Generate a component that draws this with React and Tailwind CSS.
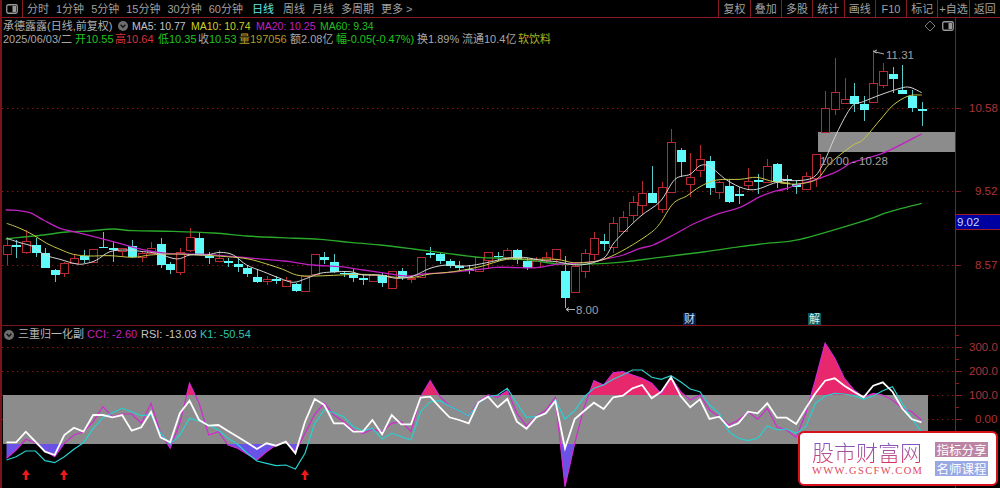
import React from "react";

const X = (i) => 6.7 + 9.63 * i;
const Z5 = (c, a, b, d, e) => [c, 200 + a / 3, 200 + b / 3, 200 + d / 3, 200 + e / 3];
const Z4 = (c, a, b, d, e) => [c, 120 + a / 3, 120 + b / 3, 120 + d / 3, 120 + e / 3];
const Z3 = (c, a, b, d, e) => [c, 40 + a / 3, 40 + b / 3, 40 + d / 3, 40 + e / 3];
const R = 1, C = 0;
const candles = [
  ...[
    [R,135,163,112,195],[C,135,140,120,175],[R,122,155,90,163],[C,135,158,115,170],[C,160,203,143,205],[C,210,225,208,247],
    [R,189,220,185,230],[R,173,188,165,192],[C,168,180,150,190],[R,146,187,146,190],[C,140,142,95,142],[C,144,148,125,185],
    [R,144,153,144,170],[C,137,172,120,175],[R,160,170,153,185],[R,145,158,125,162],[C,132,195,115,203],[C,192,210,185,223],
    [R,156,215,143,225],[R,112,150,83,155],[C,115,165,97,165],[C,167,173,155,193],[R,175,182,150,185],[C,184,190,175,200],
    [C,193,202,178,215],[C,205,222,195,230],[C,230,245,210,248],[R,238,244,228,255],[C,238,244,228,252],
    [R,240,257,230,258],[C,252,272,248,277],[R,227,274,227,276],[R,162,222,162,224],[C,170,180,155,192],[C,186,216,163,218],
    [C,218,222,212,232],[C,218,235,205,246],[C,233,239,222,256],[R,226,244,222,246],[C,226,248,220,260],[R,214,263,214,265],
    [C,212,232,203,240],[R,233,238,225,250],[R,172,232,172,234],[C,159,163,140,175],[C,162,183,160,192],[C,184,198,178,205],
    [C,197,204,182,212],[C,208,212,195,222],[R,172,212,172,216],[R,157,180,157,205],[C,167,170,155,182],[R,149,172,143,172],
    [C,150,180,148,192],[C,183,203,175,210],[R,182,202,170,204],[R,172,180,155,185],[R,146,178,146,190],
  ].map((a) => Z5(...a)),
  ...[
    [C,453,535,408,565],[R,438,516,430,518],[R,398,454,388,475],[R,354,401,335,420],[C,362,373,343,393],[R,308,381,292,400],
    [R,290,332,272,340],[R,245,286,228,310],[R,218,256,183,285],[C,220,250,137,250],[R,202,268,185,280],[R,67,217,28,217],
    [C,90,125,83,172],[R,170,193,100,232],[R,117,150,75,170],[C,122,204,108,225],[R,187,217,182,238],[C,198,246,180,250],
    [C,222,226,200,252],[R,182,196,145,208],[C,181,185,163,222],[R,139,187,117,190],[C,133,187,128,205],
  ].map((a) => Z4(...a)),
  ...[
    [C,418,421,405,450],[C,433,441,420,462],[R,408,447,395,450],[R,343,415,343,440],[R,205,275,152,277],[R,155,207,55,225],
    [R,177,188,115,190],[C,168,191,128,215],[C,193,209,168,242],[R,130,187,30,187],[R,94,136,70,145],[C,103,116,80,160],
    [C,150,163,75,163],[C,168,203,150,215],[C,208,212,187,258],
  ].map((a) => Z3(...a)),
];

const pz = (ox, oy, pts) => pts.map(([x, y]) => [ox + x / 3, oy + y / 3]);
const toStr = (pts) => pts.map((p) => p.map((n) => n.toFixed(1)).join(",")).join(" ");

const ma20 = [
  ...pz(0,200,[[17,30],[50,31],[90,38],[130,60],[180,85],[230,97],[290,112],[350,128],[400,142],[450,153],[500,160],[550,162],[620,163],[700,170],[760,175]]),
  ...pz(280,200,[[0,182],[30,185],[100,195],[180,200],[250,210],[320,220],[380,228],[430,222],[500,218],[600,208],[650,202],[720,203],[770,203],[830,193]]),
  ...pz(560,120,[[40,430],[100,425],[130,418],[190,405],[240,385],[280,375],[340,345],[400,312],[470,283],[540,262],[600,230],[640,215],[680,205]]),
  ...pz(780,40,[[0,452],[50,435],[110,418],[170,395],[215,368],[260,355],[320,335],[425,282]]),
];
const ma60 = [
  ...pz(0,200,[[17,117],[60,112],[130,105],[200,96],[270,93],[340,87],[400,92],[520,94],[640,99],[740,108]]),
  ...pz(280,200,[[0,113],[120,118],[210,127],[300,135],[400,147],[500,160],[600,172],[680,175],[760,182]]),
  ...pz(560,120,[[0,432],[120,431],[200,425],[300,412],[430,396],[540,380],[620,370],[720,358]]),
  ...pz(780,40,[[260,540],[320,518],[425,490]]),
];
const ma10 = [
  ...pz(0,200,[[20,70],[60,85],[100,105],[140,130],[180,148],[220,163],[270,168],[330,167],[400,172],[450,165],[520,162],[600,165],[680,170],[750,178]]),
  ...pz(280,200,[[0,205],[50,225],[100,228],[160,226],[230,223],[290,225],[350,232],[400,232],[450,222],[520,215],[600,200],[680,178],[760,178],[830,178]]),
  ...pz(560,120,[[40,428],[100,425],[140,415],[200,385],[270,340],[300,310],[340,250],[380,228],[420,200],[470,180],[540,178],[590,172],[640,185],[690,190]]),
  ...pz(780,40,[[0,428],[50,432],[110,418],[150,370],[215,318],[250,298],[300,240],[340,195],[385,168],[425,165]]),
];
const ma5 = [
  ...pz(0,200,[[20,115],[60,128],[100,140],[135,165],[180,178],[230,192],[260,190],[290,180],[330,155],[380,150],[430,155],[470,160],[530,177],[570,165],[620,165],[660,157],[700,165],[740,195],[790,215]]),
  ...pz(280,200,[[0,235],[40,247],[80,235],[120,220],[160,216],[210,215],[250,225],[300,225],[350,235],[400,228],[450,205],[500,195],[560,198],[620,188],[680,175],[730,172],[790,182],[830,185]]),
  ...pz(560,120,[[60,435],[130,415],[165,365],[240,290],[300,245],[345,178],[390,163],[420,137],[450,140],[500,180],[550,205],[590,208],[640,190],[680,180]]),
  ...pz(780,40,[[0,418],[50,422],[100,412],[130,370],[170,280],[215,200],[250,185],[300,165],[360,145],[390,142],[425,158]]),
];

const smooth = (pts) => {
  let d = `M${pts[0][0]},${pts[0][1]}`;
  for (let i = 0; i < pts.length - 1; i++) {
    const p0 = pts[Math.max(0, i - 1)], p1 = pts[i], p2 = pts[i + 1], p3 = pts[Math.min(pts.length - 1, i + 2)];
    d += ` C${p1[0] + (p2[0] - p0[0]) / 6},${p1[1] + (p2[1] - p0[1]) / 6} ${p2[0] - (p3[0] - p1[0]) / 6},${p2[1] - (p3[1] - p1[1]) / 6} ${p2[0]},${p2[1]}`;
  }
  return d;
};

const rsiY = [367,367,335,365,395,405,345,323,335,285,285,292,285,332,322,275,352,367,280,242,300,317,315,333,350,368,387,370,377,365,400,305,237,255,310,310,335,335,300,343,285,313,313,233,230,262,292,300,310,247,230,262,237,305,326,292,280,243,385,297,272,248,267,232,227,205,195,235,215,172,228,262,238,297,290,322,310,275,280,250,293,293,312,265,220,182,175,197,215,232,197,187,215,265,297,307];
const cciY = [415,390,358,368,393,410,370,345,335,305,260,290,282,282,310,250,340,385,310,190,250,345,335,375,385,403,420,395,375,365,395,340,283,250,285,305,330,340,328,335,310,305,335,230,182,230,258,272,288,245,225,232,212,280,318,290,270,232,500,370,260,182,195,158,155,165,175,190,222,172,215,240,225,270,290,315,300,275,298,265,320,330,352,280,180,70,115,175,210,232,220,225,240,265,275,300];
const k1Y = [420,410,393,393,422,428,410,388,368,325,293,278,265,275,287,285,340,372,345,295,303,315,330,355,373,400,423,430,437,435,447,400,310,270,278,290,320,332,325,357,340,350,360,275,245,242,258,272,288,250,230,225,205,250,292,290,280,240,297,272,230,205,195,178,165,150,150,172,178,167,185,207,215,255,280,335,355,362,355,318,330,327,340,320,250,228,220,222,227,237,228,212,200,250,295,335];
const toPts = (arr) => arr.map((v, i) => [X(i) - 0.2, 320 + v / 3]);
const rsi = toPts(rsiY), cci = toPts(cciY), k1 = toPts(k1Y);
const closeTo = (pts, y) => toStr([[pts[0][0], y], ...pts, [pts[pts.length - 1][0], y]]);

const CJK = "font-['Liberation_Sans','Noto_Sans_CJK_SC',sans-serif]";

function PanelIcon() {
  return (
    <svg width="12" height="10" viewBox="0 0 12 10" fill="none">
      <rect x="0.75" y="0.75" width="10.5" height="8.5" rx="1.5" stroke="#9a9a9a" strokeWidth="1.3" />
      <rect x="6.5" y="2" width="3.5" height="6" fill="#9a9a9a" />
    </svg>
  );
}

function Chevron() {
  return (
    <svg width="10" height="10" viewBox="0 0 10 10" className="shrink-0">
      <circle cx="5" cy="5" r="5" fill="#6e6e6e" />
      <path d="M2.6 3.8 L5 6.3 L7.4 3.8" fill="none" stroke="#111" strokeWidth="1.3" />
    </svg>
  );
}

const leftTabs = [
  ["分时", 0], ["1分钟", 0], ["5分钟", 0], ["15分钟", 0], ["30分钟", 0], ["60分钟", 0],
  ["日线", 1], ["周线", 0], ["月线", 0], ["多周期", 0], ["更多 >", 0],
];
const rightTabs = ["复权", "叠加", "多股", "统计", "画线", "F10", "标记", "+自选", "返回"];

function Toolbar() {
  return (
    <div className="h-[18px] shrink-0 flex items-stretch border-b border-[#8a1a22] text-[11px] leading-[16px] text-[#a0a0a0]">
      <div className="w-[21px] shrink-0 flex items-center justify-center border-r border-[#8a1a22]">
        <PanelIcon />
      </div>
      <div className="flex items-center gap-[7px] pl-[4px]">
        {leftTabs.map(([t, on]) => (
          <span key={t} className={on ? "text-[#5fe6e6] mx-[2px]" : ""}>{t}</span>
        ))}
      </div>
      <div className="ml-auto flex items-stretch">
        {rightTabs.map((t) => (
          <span key={t} className="w-[31.3px] flex items-center justify-center border-l border-[#8a1a22] whitespace-nowrap">{t}</span>
        ))}
      </div>
    </div>
  );
}

function MainLegend() {
  const G = "text-[#1fc41f]", r = "text-[#d8303a]", y = "text-[#b39a2a]", g = "text-[#a8a8a8]";
  return (
    <div className="absolute left-[1px] top-[1px] flex flex-col text-[11px] leading-[12px] whitespace-nowrap pointer-events-none">
      <div className="flex items-center h-[14px]">
        <span className="text-[#b0b0b0] w-[115px]">承德露露(日线,前复权)</span>
        <Chevron />
        <span className="text-[#c4c4c4] ml-[4px] w-[59px] text-[10.5px]">MA5: 10.77</span>
        <span className="text-[#d0d020] w-[65px] text-[10.5px]">MA10: 10.74</span>
        <span className="text-[#c020c0] w-[64px] text-[10.5px]">MA20: 10.25</span>
        <span className="text-[#20c020] text-[10.5px]">MA60: 9.34</span>
      </div>
      <div className="flex items-center h-[12px]">
        <span className={`${g} w-[72px]`}>2025/06/03/二</span>
        <span className={`${G} w-[40px]`}>开10.55</span>
        <span className={`${r} w-[43px]`}>高10.64</span>
        <span className={`${G} w-[40px]`}>低10.35</span>
        <span className={`w-[41px] ${G}`}><span className={g}>收</span>10.53</span>
        <span className={`w-[51px] ${y}`}>量197056</span>
        <span className={`${g} w-[46px]`}>额2.08亿</span>
        <span className={`${G} w-[81px]`}>幅-0.05(-0.47%)</span>
        <span className={`${g} w-[45px]`}>换1.89%</span>
        <span className={`${g} w-[56px]`}>流通10.4亿</span>
        <span className="text-[#b0b020]">软饮料</span>
      </div>
    </div>
  );
}

function LowerLegend() {
  return (
    <div className="absolute left-[2px] top-[2px] flex items-center h-[13px] text-[11px] whitespace-nowrap pointer-events-none">
      <Chevron />
      <span className="text-[#b8b8b8] ml-[4px] w-[69px]">三重归一化副</span>
      <span className="text-[#c020c0] w-[54px]">CCI: -2.60</span>
      <span className="text-[#c4c4c4] w-[59px]">RSI: -13.03</span>
      <span className="text-[#2fc4b0]">K1: -50.54</span>
    </div>
  );
}

function MainChart() {
  return (
    <svg className="block w-[953px] h-[307px]" viewBox="2 18 953 307">
      {[108, 191, 265].map((y) => (
        <line key={y} x1="2" x2="955" y1={y + 0.5} y2={y + 0.5} stroke="#7a1a1a" strokeDasharray="1.5 3.5" />
      ))}
      <rect x="818" y="132" width="137" height="20" fill="#8c8c8c" />
      <g shapeRendering="crispEdges">
        {candles.map(([c, a, b, d, e], i) => {
          const x = Math.round(X(i));
          const col = c ? "#b82a32" : "#5ffafa";
          return (
            <g key={i}>
              <line x1={x + 0.5} x2={x + 0.5} y1={d} y2={a} stroke={c ? col : "#58c8c8"} />
              <line x1={x + 0.5} x2={x + 0.5} y1={b} y2={e} stroke={c ? col : "#58c8c8"} />
              {c ? (
                <rect x={x - 3.5} y={a + 0.5} width="8" height={Math.max(b - a, 1)} fill="#000" stroke={col} />
              ) : (
                <rect x={x - 4} y={a} width="9" height={Math.max(b - a, 1.5)} fill={col} />
              )}
            </g>
          );
        })}
      </g>
      <path d={smooth(ma60)} fill="none" stroke="#2aa82a" strokeWidth="1.4" />
      <path d={smooth(ma20)} fill="none" stroke="#c020c0" strokeWidth="1.3" />
      <path d={smooth(ma10)} fill="none" stroke="#c8c84a" strokeWidth="1" />
      <path d={smooth(ma5)} fill="none" stroke="#d4d4d4" strokeWidth="1" />
      <g fontFamily="'Liberation Sans',sans-serif" fontSize="11" fill="#a0a0a0">
        <text x="886" y="59" fontSize="11.5">11.31</text>
        <path d="M873.5 51.5 L877 50 M873.5 51.5 L877 53 M873.5 51.5 L884 54" stroke="#b0b0b0" fill="none" />
        <text x="820" y="165" fontSize="11.5">10.00 - 10.28</text>
        <text x="576" y="314" fontSize="11.5">8.00</text>
        <path d="M566 309.5 L575 309.5 M566 309.5 L569 307.5 M566 309.5 L569 311.5" stroke="#b0b0b0" fill="none" />
      </g>
      <g fontFamily="'Noto Sans CJK SC',sans-serif" fontSize="11">
        <rect x="683" y="313" width="13" height="12" fill="#0a1a48" />
        <text x="684" y="323" fill="#c8e0f0">财</text>
        <rect x="808" y="313" width="13" height="12" fill="#0c5a5a" />
        <text x="809" y="323" fill="#d0f0f0">解</text>
      </g>
      <path d="M930 21 L935 26 L930 31 L925 26 Z" fill="none" stroke="#7a7a7a" />
      <g transform="translate(942 21)">
        <rect x="0.75" y="0.75" width="10.5" height="8.5" rx="1.5" fill="none" stroke="#9a9a9a" strokeWidth="1.3" />
        <rect x="6.5" y="2" width="3.5" height="6" fill="#9a9a9a" />
      </g>
    </svg>
  );
}

function LowerChart() {
  const top = 395, bot = 444;
  return (
    <svg className="block w-[953px] h-[162px]" viewBox="2 326 953 162">
      <defs>
        <clipPath id="above"><rect x="0" y="326" width="955" height={top - 326} /></clipPath>
        <clipPath id="below"><rect x="0" y={bot} width="955" height={488 - bot} /></clipPath>
      </defs>
      {[347, 371, 395, 419].map((y) => (
        <line key={y} x1="2" x2="955" y1={y + 0.5} y2={y + 0.5} stroke="#7a1a1a" strokeDasharray="1.5 3.5" />
      ))}
      <rect x="3" y={top} width="925" height={bot - top} fill="#8c8c8c" />
      <polygon points={closeTo(cci, top)} fill="#e8286c" clipPath="url(#above)" />
      <polygon points={closeTo(cci, bot)} fill="#6a52e6" clipPath="url(#below)" />
      <polyline points={toStr(cci)} fill="none" stroke="#d428d4" strokeWidth="1.2" />
      <polyline points={toStr(k1)} fill="none" stroke="#28d0d0" strokeWidth="1.2" />
      <polyline points={toStr(rsi)} fill="none" stroke="#ffffff" strokeWidth="1.8" />
      {[26, 64, 305].map((x) => (
        <path key={x} d={`M${x} 469.5 L${x + 4} 475 L${x + 1.3} 475 L${x + 1.3} 480 L${x - 1.3} 480 L${x - 1.3} 475 L${x - 4} 475 Z`} fill="#f01818" />
      ))}
    </svg>
  );
}

function MainAxis() {
  return (
    <svg className="block w-[44px] h-[307px]" viewBox="956 18 44 307">
      <g fontFamily="'Liberation Sans',sans-serif" fontSize="11.5" fill="#a8343a">
        <text x="969" y="112">10.58</text>
        <text x="975" y="195">9.52</text>
        <text x="975" y="269">8.57</text>
      </g>
      {[108, 191, 265].map((y) => (
        <line key={y} x1="956" x2="961" y1={y + 0.5} y2={y + 0.5} stroke="#8a1a22" />
      ))}
    </svg>
  );
}

function LowerAxis() {
  return (
    <svg className="block w-[44px] h-[162px]" viewBox="956 326 44 162">
      <g fontFamily="'Liberation Sans',sans-serif" fontSize="11.5" fill="#a8343a">
        <text x="969" y="351">300.0</text>
        <text x="969" y="375">200.0</text>
        <text x="969" y="399">100.0</text>
        <text x="975" y="423">0.00</text>
      </g>
      {[347, 371, 395, 419].map((y) => (
        <line key={y} x1="956" x2="962" y1={y + 0.5} y2={y + 0.5} stroke="#8a1a22" />
      ))}
      {[335, 359, 383, 407, 431].map((y) => (
        <line key={y} x1="956" x2="959" y1={y + 0.5} y2={y + 0.5} stroke="#8a1a22" />
      ))}
    </svg>
  );
}

function Logo() {
  return (
    <div className="absolute left-[796px] top-[431px] w-[200px] h-[55px] bg-white border-[2px] border-[#d8101c] rounded-[6px] flex items-center pl-[12px] pr-[8px] justify-between">
      <div className="flex flex-col items-start">
        <span className="text-[22px] leading-[24px] font-['Noto_Sans_CJK_SC',sans-serif] font-light bg-linear-to-b from-[#6a52d8] to-[#d83060] bg-clip-text text-transparent whitespace-nowrap">股市财富网</span>
        <span className="text-[10.5px] leading-[14px] mt-[1px] tracking-[1.4px] font-['Liberation_Serif',serif] text-[#e0485a] whitespace-nowrap">WWW.GSCFW.COM</span>
      </div>
      <div className="flex flex-col gap-[4px] text-[12.5px] leading-[15px] text-white font-['Noto_Sans_CJK_SC',sans-serif]">
        <span className="w-[53px] text-center bg-[#bc84a4] whitespace-nowrap">指标分享</span>
        <span className="w-[53px] text-center bg-[#98a8e4] whitespace-nowrap">名师课程</span>
      </div>
    </div>
  );
}

export default function App() {
  return (
    <div className={`relative w-[1000px] h-[488px] overflow-hidden bg-black border-l-2 border-[#7a1418] flex flex-col ${CJK}`}>
      <Toolbar />
      <div className="flex h-[308px] shrink-0 border-b border-[#7a1418]">
        <div className="relative w-[953px]">
          <MainChart />
          <MainLegend />
        </div>
        <div className="relative flex-1 border-l border-[#8a1a22]">
          <MainAxis />
          <div className="absolute left-0 right-0 top-[196px] h-[16px] bg-[#0000a0] border-y border-[#a01c28] text-[11.5px] leading-[14px] text-[#c8d8ff] pl-[1px]">9.02</div>
        </div>
      </div>
      <div className="flex flex-1 min-h-0">
        <div className="relative w-[953px]">
          <LowerChart />
          <LowerLegend />
        </div>
        <div className="flex-1 border-l border-[#8a1a22]">
          <LowerAxis />
        </div>
      </div>
      <Logo />
    </div>
  );
}
